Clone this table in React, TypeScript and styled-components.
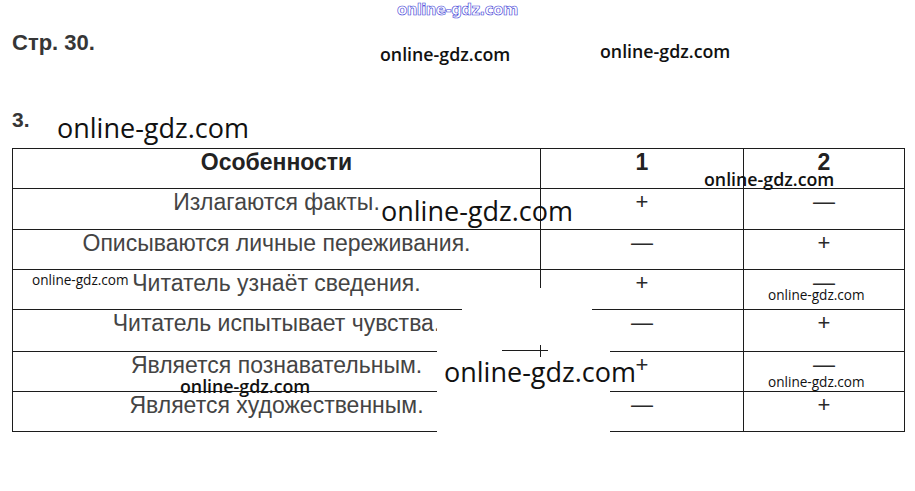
import React from "react";
import styled, { createGlobalStyle } from "styled-components";

const Global = createGlobalStyle`
  html, body { margin: 0; padding: 0; background: #ffffff; }
  body { font-family: "Liberation Sans", Arial, sans-serif; }
`;

const Page = styled.div`
  position: relative;
  width: 915px;
  height: 491px;
  overflow: hidden;
  background: #ffffff;
  padding: 31px 0 0 12px;
  box-sizing: border-box;
`;

const Title = styled.div`
  font-family: "Liberation Sans", Arial, sans-serif;
  font-weight: 700;
  font-size: 22px;
  line-height: 24px;
  color: #363636;
`;

const TaskNo = styled.div`
  margin-top: 53px;
  font-family: "Liberation Sans", Arial, sans-serif;
  font-weight: 700;
  font-size: 21px;
  line-height: 24px;
  color: #363636;
`;

const Table = styled.div`
  margin-top: 16px;
  width: 893px;
  border-top: 1px solid #1c1c1c;
  border-left: 1px solid #1c1c1c;
  box-sizing: border-box;
`;

const Row = styled.div<{ $h: number }>`
  display: grid;
  grid-template-columns: 528px 203px 161px;
  height: ${(p) => p.$h}px;
  box-sizing: border-box;
  border-bottom: 1px solid #1c1c1c;
`;

const Cell = styled.div<{ $head?: boolean; $mark?: boolean }>`
  border-right: 1px solid #1c1c1c;
  box-sizing: border-box;
  text-align: center;
  padding-top: ${(p) => (p.$mark ? 1 : 2)}px;
  font-family: "Liberation Sans", Arial, sans-serif;
  font-size: ${(p) => (p.$mark ? 22 : 23)}px;
  line-height: 23px;
  font-weight: ${(p) => (p.$head ? 700 : 400)};
  color: ${(p) => (p.$head ? "#222222" : p.$mark ? "#2a2a2a" : "#444444")};
  white-space: nowrap;
`;

const Mark = styled.span<{ $x: number; $y: number; $size: number; $w: number }>`
  position: absolute;
  left: ${(p) => p.$x}px;
  top: ${(p) => p.$y}px;
  font-family: "Open Sans", "Noto Sans", sans-serif;
  font-size: ${(p) => p.$size}px;
  font-weight: ${(p) => p.$w};
  line-height: 1;
  color: #111111;
  white-space: nowrap;
`;

const BlueMark = styled.span`
  position: absolute;
  left: 397px;
  top: 3px;
  font-family: "DejaVu Sans", Verdana, sans-serif;
  font-weight: 700;
  font-size: 15px;
  letter-spacing: -0.6px;
  line-height: 1;
  color: #ffffff;
  -webkit-text-stroke: 0.6px #3a3ad6;
  white-space: nowrap;
`;

const Patch = styled.div`
  position: absolute;
  left: 437px;
  top: 288px;
  width: 173px;
  height: 152px;
  background: #ffffff;
`;

const Segment = styled.div<{ $x: number; $y: number; $w: number; $h: number }>`
  position: absolute;
  left: ${(p) => p.$x}px;
  top: ${(p) => p.$y}px;
  width: ${(p) => p.$w}px;
  height: ${(p) => p.$h}px;
  background: #1c1c1c;
`;

type RowData = { label: string; a: string; b: string; h: number };

const rows: RowData[] = [
  { label: "Излагаются факты.", a: "+", b: "—", h: 41 },
  { label: "Описываются личные переживания.", a: "—", b: "+", h: 40 },
  { label: "Читатель узнаёт сведения.", a: "+", b: "—", h: 40 },
  { label: "Читатель испытывает чувства.", a: "—", b: "+", h: 42 },
  { label: "Является познавательным.", a: "+", b: "—", h: 40 },
  { label: "Является художественным.", a: "—", b: "+", h: 40 },
];

type MarkData = { x: number; base: number; size: number; w: number };

const marks: MarkData[] = [
  { x: 380, base: 62, size: 17.8, w: 600 },
  { x: 600, base: 59, size: 17.8, w: 600 },
  { x: 57, base: 138, size: 27, w: 400 },
  { x: 704, base: 187, size: 17.8, w: 600 },
  { x: 381, base: 221, size: 27, w: 400 },
  { x: 32, base: 285, size: 13.6, w: 400 },
  { x: 768, base: 300, size: 13.6, w: 400 },
  { x: 444, base: 382, size: 27, w: 400 },
  { x: 180, base: 394, size: 17.8, w: 600 },
  { x: 768, base: 387, size: 13.6, w: 400 },
];

export default function App() {
  return (
    <>
      <Global />
      <Page>
        <Title>Стр. 30.</Title>
        <TaskNo>3.</TaskNo>
        <Table>
          <Row $h={40}>
            <Cell $head>Особенности</Cell>
            <Cell $head>1</Cell>
            <Cell $head>2</Cell>
          </Row>
          {rows.map((r) => (
            <Row key={r.label} $h={r.h}>
              <Cell>{r.label}</Cell>
              <Cell $mark>{r.a}</Cell>
              <Cell $mark>{r.b}</Cell>
            </Row>
          ))}
        </Table>

        <Patch />
        <Segment $x={437} $y={309} $w={25} $h={1} />
        <Segment $x={592} $y={309} $w={18} $h={1} />
        <Segment $x={502} $y={350} $w={46} $h={1} />
        <Segment $x={540} $y={345} $w={1} $h={12} />

        <BlueMark>online-gdz.com</BlueMark>
        {marks.map((m, i) => (
          <Mark key={i} $x={m.x} $y={m.base - 0.888 * m.size} $size={m.size} $w={m.w}>
            online-gdz.com
          </Mark>
        ))}
      </Page>
    </>
  );
}
